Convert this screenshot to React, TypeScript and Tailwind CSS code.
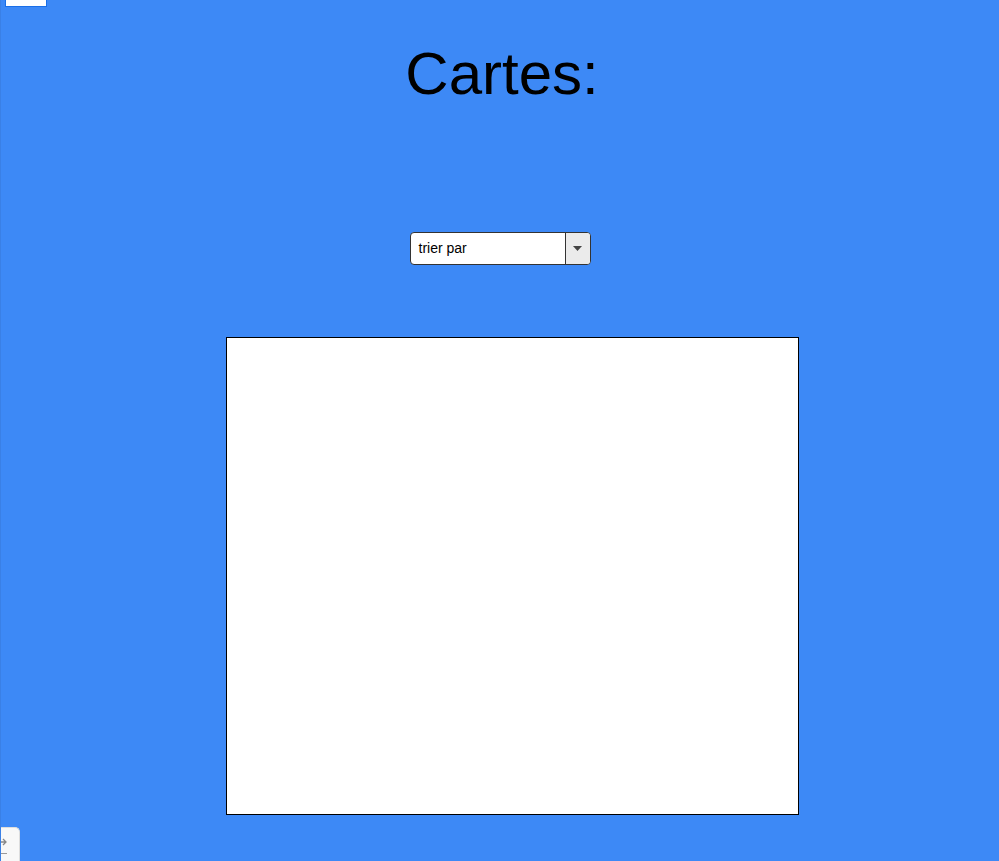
import React from "react";

export default function App() {
  return (
    <div className="relative w-[999px] h-[861px] overflow-hidden bg-[#3d89f6] border-l border-[#3a80e6] font-['Liberation_Sans',Arial,sans-serif]">
      <div className="absolute left-[4px] top-0 w-[42px] h-[7px] bg-white border border-t-0 border-[#1a6fe8]" />
      <div className="flex flex-col items-center">
        <h1 className="mt-[39px] h-[70px] text-[60px] leading-[70px] text-black pl-[4px]">Cartes:</h1>
        <div className="mt-[123px] flex w-[181px] h-[33px] bg-white border border-[#333] rounded-[4px] overflow-hidden">
          <div className="flex-1 flex items-center pl-[8px] text-[14px] text-black">trier par</div>
          <div className="w-[25px] flex items-center justify-center bg-[#ebebeb] border-l border-[#333]">
            <svg width="9" height="5" viewBox="0 0 9 5"><path d="M0 0h9L4.5 5z" fill="#444" /></svg>
          </div>
        </div>
        <div className="mt-[72px] ml-[24px] w-[573px] h-[478px] bg-white border border-black" />
      </div>
      <div className="absolute left-0 top-[827px] w-[19px] h-[36px] bg-[#f8f8f8] rounded-tr-[5px] border-r border-t border-[#ddd] text-[#888]">
        <svg className="absolute left-[-2px] top-[10px]" width="10" height="8" viewBox="0 0 10 8"><path d="M0 4h7M4 1l3 3-3 3" stroke="#888" strokeWidth="1.3" fill="none" /></svg>
        <div className="absolute left-0 top-[25px] w-[6px] h-[1px] bg-[#999]" />
      </div>
    </div>
  );
}
